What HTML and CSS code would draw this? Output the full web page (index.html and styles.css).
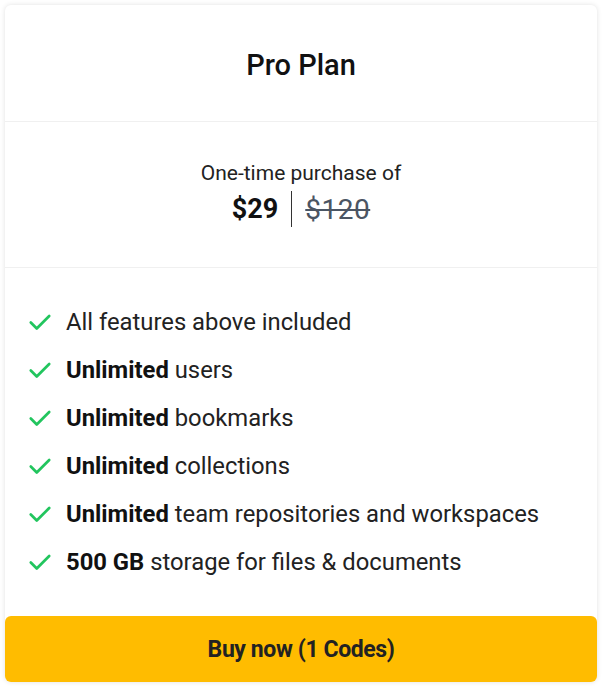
FILE: index.html
```html
<!DOCTYPE html>
<html lang="en">
  <head>
    <meta charset="UTF-8" />
    <meta name="viewport" content="width=device-width, initial-scale=1.0" />
    <title>Pro Plan</title>
    <link rel="stylesheet" href="styles.css">
  </head>
  <body>
    <div class="plan-card">
      <div class="plan-header">
        <h2>Pro Plan</h2>
      </div>
      <div class="plan-price">
        <p class="price-label">One-time purchase of</p>
        <div class="price-row">
          <span class="price-now">$29</span>
          <span class="price-sep"></span>
          <span class="price-old">$120</span>
        </div>
      </div>
      <ul class="feature-list">
        <li>
          <svg class="check" viewBox="0 0 24 24"><path d="M3.5 12.5l5.5 5.5L20.5 6.5"/></svg>
          <span>All features above included</span>
        </li>
        <li>
          <svg class="check" viewBox="0 0 24 24"><path d="M3.5 12.5l5.5 5.5L20.5 6.5"/></svg>
          <span><b>Unlimited</b> users</span>
        </li>
        <li>
          <svg class="check" viewBox="0 0 24 24"><path d="M3.5 12.5l5.5 5.5L20.5 6.5"/></svg>
          <span><b>Unlimited</b> bookmarks</span>
        </li>
        <li>
          <svg class="check" viewBox="0 0 24 24"><path d="M3.5 12.5l5.5 5.5L20.5 6.5"/></svg>
          <span><b>Unlimited</b> collections</span>
        </li>
        <li>
          <svg class="check" viewBox="0 0 24 24"><path d="M3.5 12.5l5.5 5.5L20.5 6.5"/></svg>
          <span><b>Unlimited</b> team repositories and workspaces</span>
        </li>
        <li>
          <svg class="check" viewBox="0 0 24 24"><path d="M3.5 12.5l5.5 5.5L20.5 6.5"/></svg>
          <span><b>500 GB</b> storage for files &amp; documents</span>
        </li>
      </ul>
      <button class="buy-btn">Buy now (1 Codes)</button>
    </div>
  </body>
</html>
```

FILE: styles.css
```css
body {
  margin: 0;
  padding: 5px;
  background-color: #ffffff;
  font-family: Roboto, "Liberation Sans", sans-serif;
  color: #1a1a1a;
}
.plan-card {
  width: 592px;
  background-color: #fff;
  border-radius: 6px;
  box-shadow: 0 0 5px rgba(0, 0, 0, 0.12);
}
.plan-header {
  padding: 44px 0 40px;
  border-bottom: 1px solid #f0f0f0;
  text-align: center;
}
.plan-header h2 {
  margin: 0;
  font-size: 29px;
  line-height: 32px;
  font-weight: 500;
  color: #111;
}
.plan-price {
  padding: 38px 0 40px;
  border-bottom: 1px solid #f0f0f0;
  text-align: center;
}
.price-label {
  margin: 0 0 5px;
  font-size: 21px;
  line-height: 26px;
  color: #222;
}
.price-row {
  display: flex;
  justify-content: center;
  align-items: center;
  gap: 13px;
  height: 36px;
}
.price-now {
  font-size: 27px;
  font-weight: 700;
  color: #111;
}
.price-sep {
  width: 1px;
  height: 36px;
  background-color: #333;
}
.price-old {
  font-size: 28px;
  letter-spacing: 0.5px;
  color: #4b5563;
  text-decoration: line-through;
  text-decoration-thickness: 2px;
}
.feature-list {
  list-style: none;
  margin: 0;
  padding: 30px 22px;
}
.feature-list li {
  display: flex;
  align-items: center;
  gap: 13px;
  height: 48px;
  font-size: 23.8px;
  color: #222;
}
.feature-list b {
  font-weight: 700;
  color: #111;
}
.check {
  flex: none;
  width: 26px;
  height: 26px;
  fill: none;
  stroke: #22c55e;
  stroke-width: 2.5;
  stroke-linecap: round;
  stroke-linejoin: round;
}
.buy-btn {
  display: block;
  width: 100%;
  height: 66px;
  padding: 0;
  border: none;
  border-radius: 6px;
  background-color: #ffbc00;
  font-family: Roboto, "Liberation Sans", sans-serif;
  font-size: 23px;
  font-weight: 700;
  letter-spacing: -0.4px;
  color: #222;
  cursor: pointer;
}
```
